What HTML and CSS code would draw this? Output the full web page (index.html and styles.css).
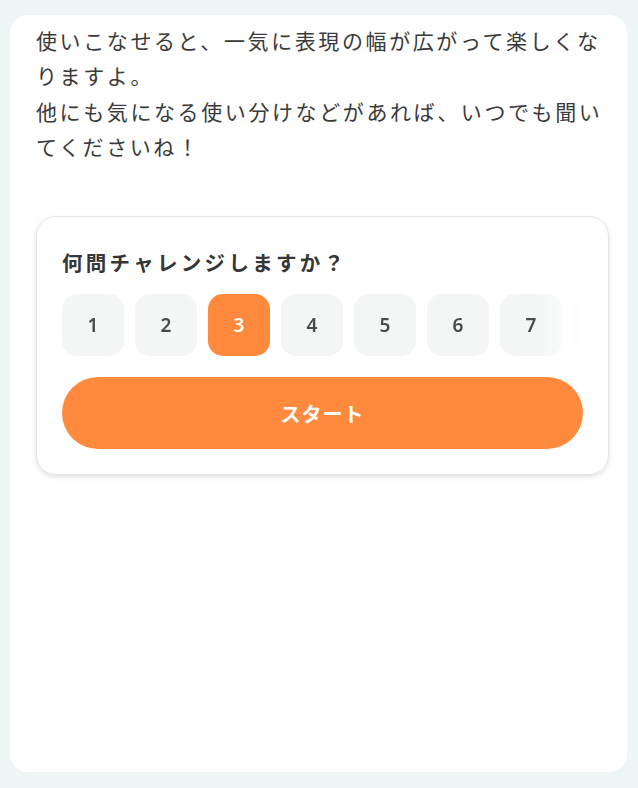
FILE: index.html
```html
<!DOCTYPE html>
<html lang="ja">
<head>
<meta charset="utf-8">
<link rel="stylesheet" href="styles.css">
</head>
<body>
<div class="panel">
  <div class="message">
    <p>使いこなせると、一気に表現の幅が広がって楽しくなりますよ。</p>
    <p>他にも気になる使い分けなどがあれば、いつでも聞いてくださいね！</p>
  </div>
  <div class="quiz-card">
    <div class="quiz-title">何問チャレンジしますか？</div>
    <div class="count-row">
      <button class="count">1</button>
      <button class="count">2</button>
      <button class="count selected">3</button>
      <button class="count">4</button>
      <button class="count">5</button>
      <button class="count">6</button>
      <button class="count">7</button>
      <button class="count">8</button>
      <button class="count">9</button>
      <button class="count">10</button>
    </div>
    <button class="start">スタート</button>
  </div>
</div>
</body>
</html>
```

FILE: styles.css
```css
html, body {
  margin: 0;
  padding: 0;
}
body {
  background: #eef6f5;
  font-family: "Noto Sans CJK JP", "Noto Sans", sans-serif;
  color: #3a3a3a;
  padding: 15px 11px 16px 10px;
  height: 788px;
  box-sizing: border-box;
}
.panel {
  background: #ffffff;
  border-radius: 18px;
  height: 100%;
  box-sizing: border-box;
  padding: 8px 18px 0 26px;
}
.message p {
  margin: 0;
  font-size: 21px;
  line-height: 35.3px;
  letter-spacing: 2.6px;
}
.quiz-card {
  margin-top: 52px;
  border: 1px solid #e2e6e6;
  border-radius: 20px;
  box-shadow: 0 2px 5px rgba(0, 0, 0, 0.12);
  padding: 30px 25px 25px 25px;
  display: flex;
  flex-direction: column;
}
.quiz-title {
  font-size: 20.5px;
  font-weight: 600;
  line-height: 30px;
  letter-spacing: 3.3px;
  color: #363636;
}
.count-row {
  margin-top: 17px;
  display: flex;
  gap: 11px;
  overflow: hidden;
  -webkit-mask-image: linear-gradient(to right, #000 calc(100% - 44px), transparent 100%);
  mask-image: linear-gradient(to right, #000 calc(100% - 44px), transparent 100%);
}
.count {
  flex: 0 0 62px;
  height: 62px;
  border: none;
  border-radius: 15px;
  background: #f4f6f6;
  font-family: "Noto Sans", "Noto Sans CJK JP", sans-serif;
  font-size: 19px;
  font-weight: 600;
  color: #4a4a4a;
  padding: 0;
}
.count.selected {
  background: #ff8a3d;
  color: #ffffff;
}
.start {
  margin-top: 21px;
  height: 72px;
  border: none;
  border-radius: 36px;
  background: #ff8a3d;
  color: #ffffff;
  font-family: "Noto Sans CJK JP", sans-serif;
  font-size: 20px;
  font-weight: 600;
  letter-spacing: 1px;
}
```
